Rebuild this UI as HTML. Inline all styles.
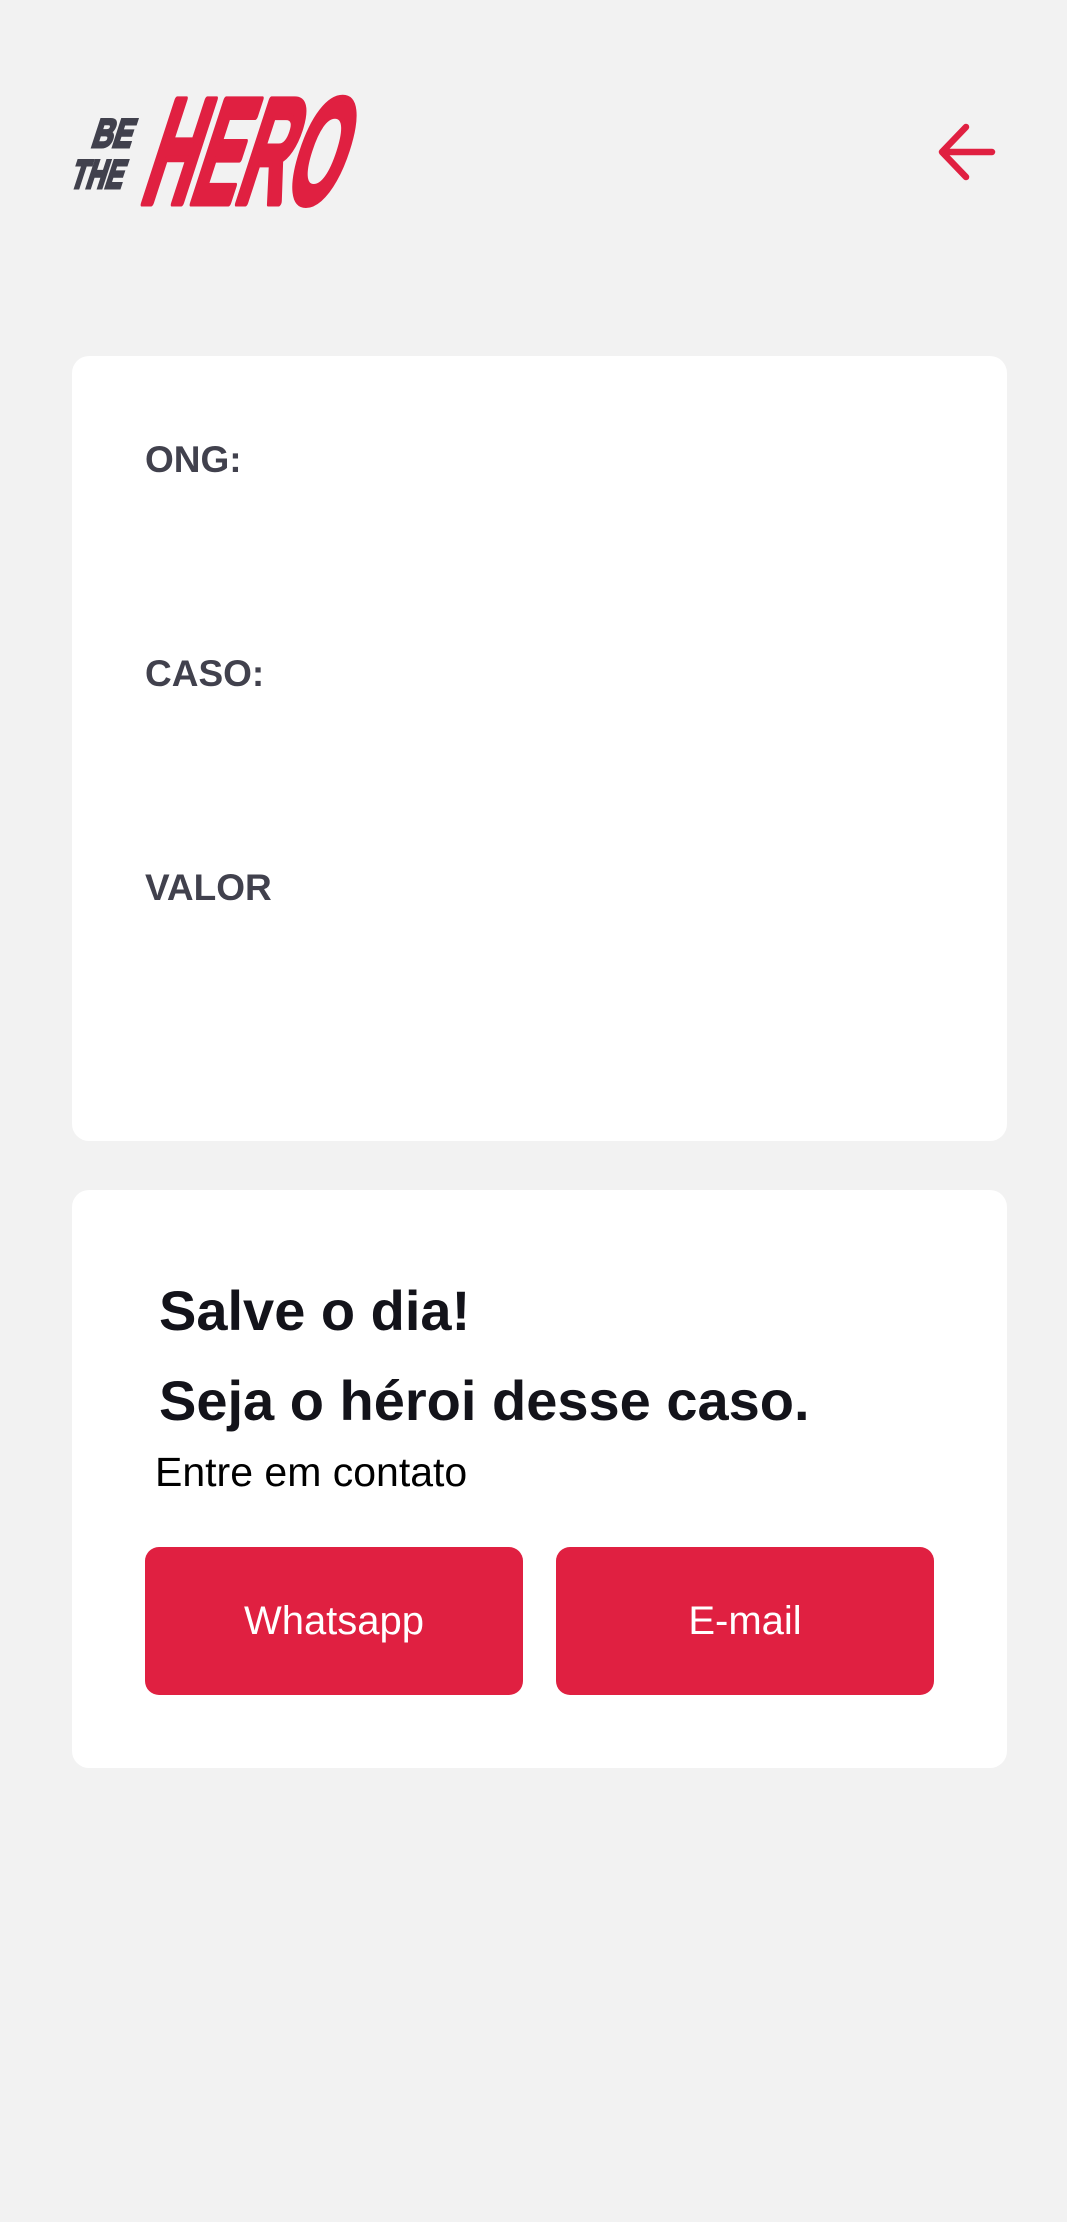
<!DOCTYPE html>
<html><head><meta charset="utf-8"><style>
html,body{margin:0;padding:0}
body{width:1067px;height:2222px;background:#f2f2f2;position:relative;font-family:"Liberation Sans",sans-serif;overflow:hidden}
.card{position:absolute;left:72px;width:935px;background:#fff;border-radius:17px}
.lbl{position:absolute;left:145px;font-size:37px;font-weight:bold;color:#41414d;line-height:1}
.h{position:absolute;left:159px;font-size:56px;font-weight:bold;color:#13131a;line-height:1;white-space:nowrap}
.btn{position:absolute;top:1547px;height:148px;width:378px;background:#e02041;border-radius:14px;color:#fff;font-size:40px;display:flex;align-items:center;justify-content:center}
</style></head><body>
<svg style="position:absolute;left:60px;top:80px" width="320" height="150" viewBox="0 0 320 150">
<g transform="skewX(-18)">
<text x="52" y="67" font-family="Liberation Sans" font-weight="bold" font-size="40" fill="#41414d" stroke="#41414d" stroke-width="3" textLength="40" lengthAdjust="spacingAndGlyphs">BE</text>
<text x="44" y="108" font-family="Liberation Sans" font-weight="bold" font-size="40" fill="#41414d" stroke="#41414d" stroke-width="3" textLength="52" lengthAdjust="spacingAndGlyphs">THE</text>
<text x="118" y="123" font-family="Liberation Sans" font-weight="bold" font-size="150" fill="#e02041" stroke="#e02041" stroke-width="7" stroke-linejoin="round" textLength="196" lengthAdjust="spacingAndGlyphs">HERO</text>
</g>
</svg>
<svg style="position:absolute;left:930px;top:118px" width="70" height="70" viewBox="0 0 70 70">
<path d="M12 34 H62 M36 9 L12 34 L36 59" fill="none" stroke="#e02041" stroke-width="6.5" stroke-linecap="round" stroke-linejoin="round"/>
</svg>
<div class="card" style="top:356px;height:785px"></div>
<div class="lbl" style="top:441px">ONG:</div>
<div class="lbl" style="top:655px">CASO:</div>
<div class="lbl" style="top:869px">VALOR</div>
<div class="card" style="top:1190px;height:578px"></div>
<div class="h" style="top:1283px">Salve o dia!</div>
<div class="h" style="top:1373px">Seja o héroi desse caso.</div>
<div style="position:absolute;left:155px;top:1452px;font-size:41px;color:#000;line-height:1">Entre em contato</div>
<div class="btn" style="left:145px">Whatsapp</div>
<div class="btn" style="left:556px">E-mail</div>
</body></html>
